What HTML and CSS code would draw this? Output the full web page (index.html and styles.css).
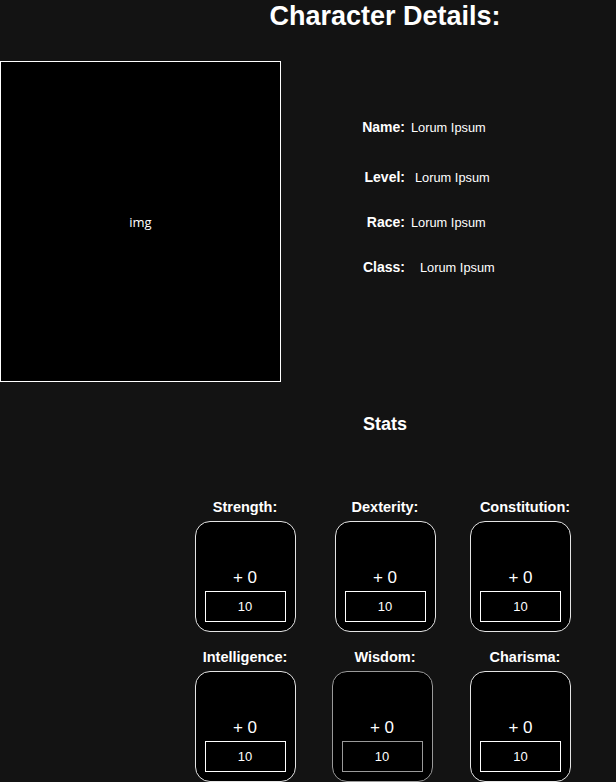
FILE: index.html
```html
<!DOCTYPE html>
<html lang="en">
<head>
<meta charset="utf-8">
<title>Character Details</title>
<link rel="stylesheet" href="styles.css">
</head>
<body>
<div class="viewport">
  <main class="sheet">
    <h1 class="title">Character Details:</h1>
    <section class="top">
      <div class="portrait"><span class="portrait-alt">img</span></div>
      <div class="details">
        <div class="detail detail--first"><span class="detail-label">Name:</span><span class="detail-value">Lorum Ipsum</span></div>
        <div class="detail"><span class="detail-label">Level:</span><span class="detail-value detail-value--w5">Lorum Ipsum</span></div>
        <div class="detail"><span class="detail-label">Race:</span><span class="detail-value">Lorum Ipsum</span></div>
        <div class="detail"><span class="detail-label">Class:</span><span class="detail-value detail-value--w10">Lorum Ipsum</span></div>
      </div>
    </section>
    <h2 class="stats-title">Stats</h2>
    <section class="stats">
      <div class="stat"><div class="stat-label">Strength:</div><div class="stat-card"><div class="stat-mod">+ 0</div><div class="stat-score">10</div></div></div>
      <div class="stat"><div class="stat-label">Dexterity:</div><div class="stat-card"><div class="stat-mod">+ 0</div><div class="stat-score">10</div></div></div>
      <div class="stat"><div class="stat-label">Constitution:</div><div class="stat-card stat-card--nudge5"><div class="stat-mod">+ 0</div><div class="stat-score">10</div></div></div>
      <div class="stat"><div class="stat-label">Intelligence:</div><div class="stat-card"><div class="stat-mod">+ 0</div><div class="stat-score">10</div></div></div>
      <div class="stat"><div class="stat-label">Wisdom:</div><div class="stat-card stat-card--muted stat-card--nudge3"><div class="stat-mod">+ 0</div><div class="stat-score">10</div></div></div>
      <div class="stat"><div class="stat-label">Charisma:</div><div class="stat-card stat-card--nudge5"><div class="stat-mod">+ 0</div><div class="stat-score">10</div></div></div>
    </section>
  </main>
</div>
</body>
</html>
```

FILE: styles.css
```css
html, body {
  margin: 0;
  padding: 0;
  background: #131313;
  overflow: hidden;
}

body {
  font-family: "Liberation Sans", Arial, sans-serif;
  color: #ffffff;
}

.viewport {
  width: 616px;
  height: 782px;
  overflow: hidden;
}

.sheet {
  width: 770px;
}

.title {
  margin: 0;
  font-size: 27px;
  line-height: 33px;
  font-weight: bold;
  text-align: center;
}

.top {
  display: flex;
  margin-top: 28px;
}

.portrait {
  width: 279px;
  height: 319px;
  border: 1px solid #ffffff;
  background: #000000;
  display: flex;
  align-items: center;
  justify-content: center;
  flex: none;
}

.portrait-alt {
  font-family: "Open Sans", "DejaVu Sans", sans-serif;
  font-size: 13px;
}

.details {
  display: flex;
  flex-direction: column;
  gap: 29px;
  padding-top: 58px;
}

.detail {
  display: flex;
  align-items: center;
  height: 16px;
}

.detail--first {
  margin-bottom: 5px;
}

.detail-label {
  width: 124px;
  text-align: right;
  font-size: 14px;
  font-weight: bold;
}

.detail-value {
  margin-left: 6px;
  font-size: 12.8px;
}

.detail-value--w5 { margin-left: 10px; }
.detail-value--w10 { margin-left: 15px; }

.stats-title {
  margin: 32px 0 0;
  font-size: 18px;
  line-height: 21px;
  font-weight: bold;
  text-align: center;
}

.stats {
  width: 420px;
  margin: 64px auto 0;
  display: grid;
  grid-template-columns: repeat(3, 140px);
  row-gap: 17px;
}

.stat {
  display: flex;
  flex-direction: column;
  align-items: center;
}

.stat-label {
  font-size: 14.5px;
  line-height: 17px;
  font-weight: bold;
}

.stat-card {
  box-sizing: border-box;
  width: 101px;
  height: 111px;
  margin-top: 5px;
  border: 1px solid #e4e4e4;
  border-radius: 15px;
  background: #000000;
  display: flex;
  flex-direction: column;
  align-items: center;
  justify-content: flex-end;
  padding: 0 9px 9px;
}

.stat-card--nudge5 { margin-left: -9px; }
.stat-card--nudge3 { margin-left: -6px; }

.stat-card--muted { border-color: #9a9a9a; }
.stat-card--muted .stat-score { border-color: #9a9a9a; }

.stat-mod {
  font-size: 17px;
  line-height: 20px;
  margin-bottom: 3px;
}

.stat-score {
  box-sizing: border-box;
  width: 81px;
  height: 31px;
  border: 1px solid #ffffff;
  display: flex;
  align-items: center;
  justify-content: center;
  font-size: 13px;
}
```
